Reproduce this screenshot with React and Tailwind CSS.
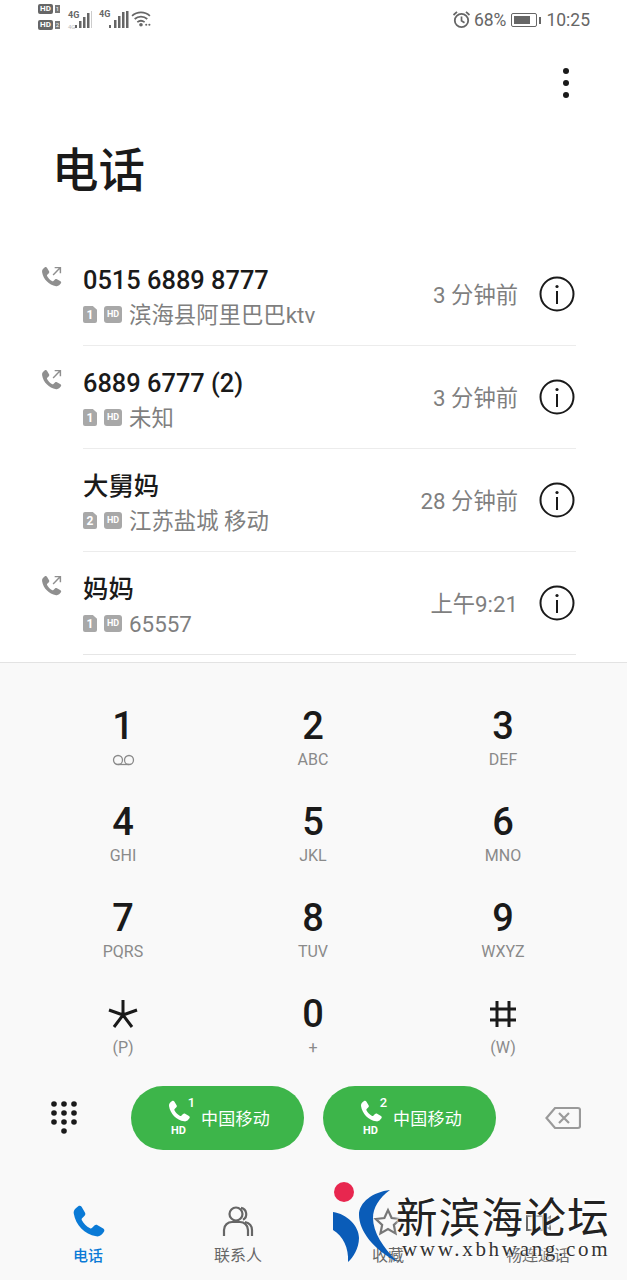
const FONT = "font-['Roboto','Noto_Sans_CJK_SC',sans-serif]"

const calls = [
  { name: "0515 6889 8777", sim: "1", sub: "滨海县阿里巴巴ktv", time: "3 分钟前", out: true },
  { name: "6889 6777 (2)", sim: "1", sub: "未知", time: "3 分钟前", out: true },
  { name: "大舅妈", sim: "2", sub: "江苏盐城 移动", time: "28 分钟前", out: false },
  { name: "妈妈", sim: "1", sub: "65557", time: "上午9:21", out: true },
]

const keys = [
  ["1", null], ["2", "ABC"], ["3", "DEF"],
  ["4", "GHI"], ["5", "JKL"], ["6", "MNO"],
  ["7", "PQRS"], ["8", "TUV"], ["9", "WXYZ"],
  ["*", "(P)"], ["0", "+"], ["#", "(W)"],
]

const PHONE = "M6.6 2.2c.7-.5 1.6-.3 2 .4l2 3.4c.4.6.3 1.4-.2 1.9L8.9 9.4c-.3.3-.4.7-.2 1.1 1.1 2.200 2.800 3.900 5 5 .4.2.8.1 1.100-.2l1.500-1.500c.5-.5 1.300-.6 1.900-.2l3.400 2c.7.4.9 1.300.4 2-1 1.500-2.600 3.100-4.600 2.700C10.300 18.900 5.100 13.700 3.900 6.600 3.600 4.700 5.100 3.200 6.600 2.200z"

const CallOutIcon = () => (
  <svg width="25" height="25" viewBox="0 0 24 24" fill="none">
    <path d={PHONE} fill="#8f8f8f" />
    <path d="M14.500 9.500 21.500 2.500M16 2.500h5.500V8" stroke="#8f8f8f" strokeWidth="1.400" />
  </svg>
)

const SimBadge = ({ n }) => (
  <span className="w-[14px] h-[17px] bg-[#a8a8a8] rounded-[2px] text-white text-[12px] font-bold flex items-center justify-center leading-none [clip-path:polygon(0_0,70%_0,100%_22%,100%_100%,0_100%)]">{n}</span>
)

const HdBadge = () => (
  <span className="w-[18px] h-[17px] bg-[#a8a8a8] rounded-[3px] text-white text-[9px] font-bold flex items-center justify-center leading-none">HD</span>
)

const InfoIcon = () => (
  <svg width="36" height="36" viewBox="0 0 36 36" fill="none">
    <circle cx="18" cy="18" r="16.500" stroke="#1a1a1a" strokeWidth="2" />
    <circle cx="18" cy="10.500" r="1.600" fill="#1a1a1a" />
    <rect x="17" y="15" width="2" height="13" fill="#1a1a1a" />
  </svg>
)

const CallRow = ({ call, last }) => (
  <div className="flex h-[103px]">
    <div className="w-[83px] pl-[38px] pt-[22px] shrink-0">
      {call.out && <CallOutIcon />}
    </div>
    <div className={`w-[493px] flex items-center border-b ${last ? "border-[#e6e6e6]" : "border-[#ececec]"}`}>
      <div className="flex-1 min-w-0 pt-[4px]">
        <p className="text-[25.400px] leading-[34px] font-medium text-[#1a1a1a]">{call.name}</p>
        <div className="flex items-center mt-[3px] text-[22.400px] leading-[30px] text-[#7f7f7f]">
          <SimBadge n={call.sim} />
          <span className="ml-[7px]"><HdBadge /></span>
          <span className="ml-[7px]">{call.sub}</span>
        </div>
      </div>
      <span className="text-[22.300px] text-[#7f7f7f] mr-[21px] pt-[3px]">{call.time}</span>
      <span className="mr-px pb-px"><InfoIcon /></span>
    </div>
  </div>
)

const StatusBar = () => (
  <div className="h-[40px] flex items-start justify-between pl-[38px] pr-[37px]">
    <div className="flex items-start gap-[5px] pt-[4px]">
      <div className="flex flex-col gap-[6px] text-[#666]">
        {["1", "2"].map((n) => (
          <div key={n} className="flex items-center gap-[2px]">
            <span className="w-[15px] h-[10px] bg-[#666] rounded-[2px] text-white text-[8px] font-bold leading-[10px] text-center">HD</span>
            <span className="w-[5px] h-[8px] bg-[#777] text-white text-[6px] leading-[8px] text-center">{n}</span>
          </div>
        ))}
      </div>
      <svg width="76" height="26" viewBox="0 0 76 26" className="text-[#666]">
        <text x="3" y="14" fontSize="9" fontWeight="700" fill="#666">4G</text>
        <text x="3" y="25" fontSize="6" fill="#bbb">4G</text>
        <rect x="10" y="21" width="2" height="3" fill="#666" /><rect x="14" y="17" width="2.500" height="7" fill="#666" />
        <rect x="18" y="13" width="2.500" height="11" fill="#666" /><rect x="22" y="9" width="2.500" height="15" fill="#666" />
        <rect x="26" y="7" width="1" height="17" fill="#ccc" />
        <text x="34" y="13" fontSize="9" fontWeight="700" fill="#666">4G</text>
        <rect x="44" y="21" width="2" height="3" fill="#666" /><rect x="49" y="16" width="2.500" height="8" fill="#666" />
        <rect x="53" y="12" width="2.500" height="12" fill="#666" /><rect x="57" y="8" width="2.500" height="16" fill="#666" />
        <rect x="61" y="7" width="2.500" height="17" fill="#666" />
      </svg>
      <svg width="21" height="18" viewBox="0 0 20 17" fill="none" className="-ml-[15px] mt-[6px]">
        <path d="M1 5.500C6 1 13 1 18 5.500M3.500 8.500C7 5.500 12 5.500 15.500 8.500M6 11.500c2-1.500 5-1.500 7 0" stroke="#666" strokeWidth="1.700" />
        <circle cx="9.500" cy="14" r="1.700" fill="#666" />
        <circle cx="14.500" cy="14" r="1" fill="#666" /><circle cx="17.500" cy="14" r="1" fill="#666" />
      </svg>
    </div>
    <div className="flex items-center h-[40px] text-[17.500px] text-[#666]">
      <svg width="19" height="19" viewBox="0 0 19 19" fill="none" className="mr-[3px] -mt-[2px]">
        <circle cx="9.500" cy="10.500" r="6.700" stroke="#666" strokeWidth="1.800" />
        <path d="M9.500 6.500v4.300l3 2M1.500 5 5 1.800M17.500 5 14 1.800" stroke="#666" strokeWidth="1.700" />
      </svg>
      <span>68%</span>
      <span className="ml-[5px] w-[26px] h-[14px] border border-[#666] rounded-[2px] p-[2px] flex">
        <span className="w-[16px] bg-[#666]" />
      </span>
      <span className="ml-[2px] w-[2px] h-[7px] bg-[#666]" />
      <span className="ml-[5px]">10:25</span>
    </div>
  </div>
)

const KeySymbol = ({ value }) => {
  if (value === "*") {
    return (
      <svg width="32" height="32" viewBox="0 0 32 32" fill="none" stroke="#1a1a1a" strokeWidth="3">
        <path d="M16 2v15M2 12l14 5M30 12l-14 5M7 29l9-12M25 29l-9-12" />
      </svg>
    )
  }
  if (value === "#") {
    return (
      <svg width="32" height="32" viewBox="0 0 32 32" fill="none" stroke="#1a1a1a" strokeWidth="3">
        <path d="M10 3v26M22 3v26M3 11h26M3 22h26" />
      </svg>
    )
  }
  return <span className="text-[38px] leading-[32px] font-medium text-[#1a1a1a]">{value}</span>
}

const DialKey = ({ value, sub }) => (
  <div className="h-[96px] flex flex-col items-center">
    <div className="h-[32px] flex items-center justify-center"><KeySymbol value={value} /></div>
    <div className="h-[20px] mt-[8px] flex items-center justify-center text-[16px] leading-[20px] text-[#8a8a8a]">
      {sub ?? (
        <svg width="23" height="12" viewBox="0 0 23 12" fill="none" stroke="#8a8a8a" strokeWidth="1.300">
          <circle cx="6" cy="6" r="4.500" /><circle cx="17" cy="6" r="4.500" /><path d="M6 10.500h11" />
        </svg>
      )}
    </div>
  </div>
)

const SimCallButton = ({ n }) => (
  <button className="w-[173px] h-[64px] rounded-full bg-[#3db54a] flex items-center justify-center text-white">
    <span className="relative w-[24px] h-[40px] mr-[9px] ml-[3px]">
      <svg width="22" height="24" viewBox="3 1.500 19.500 21" className="absolute left-0 top-[2px]"><path d={PHONE} fill="#fff" /></svg>
      <span className="absolute right-[-3px] top-[-3px] text-[13px] leading-[15px] font-medium">{n}</span>
      <span className="absolute left-[3px] top-[27px] text-[11px] leading-[12px] font-bold">HD</span>
    </span>
    <span className="text-[17px] tracking-[0.2px] pt-[3px]">中国移动</span>
  </button>
)

const Tab = ({ label, active, children }) => (
  <div className="w-[150px] flex flex-col items-center">
    <div className="h-[36px] flex items-center justify-center">{children}</div>
    <span className={`mt-[6px] leading-[20px] ${active ? "text-[15px] text-[#0a7ad6] font-medium" : "text-[16px] text-[#666]"}`}>{label}</span>
  </div>
)

// logo mark and text keep a white halo, the tab bar shows through only in the gaps
const Watermark = () => (
  <div className="absolute left-[333px] top-[1182px] w-[294px] h-[98px]">
    <svg width="75" height="82" viewBox="0 0 75 82" className="absolute left-0 top-0">
      <circle cx="11" cy="10" r="10" fill="#e8274f" />
      <path d="M0 30C14 32 26 44 26 56 26 66 20 76 15 80 16 66 10 54 0 48z" fill="#0a5cb8" />
      <path d="M57 8C40 10 26 20 26 33 26 48 40 68 65 80 50 66 40 50 40 36 40 26 46 16 57 8z" fill="#0a5cb8" />
    </svg>
    <span className="absolute left-[63px] top-[7px] text-[41.500px] leading-[52px] tracking-[1.300px] text-[#222] font-['Noto_Sans_CJK_SC',sans-serif] whitespace-nowrap [text-shadow:0_0_3px_#fff,0_0_3px_#fff,0_0_5px_#fff]">新滨海论坛</span>
    <span className="absolute left-[69px] top-[55px] text-[21px] leading-[24px] tracking-[2.700px] text-[#333] font-['Liberation_Serif',serif] whitespace-nowrap [text-shadow:0_0_2px_#fff,0_0_3px_#fff,0_0_4px_#fff]">www.xbhwang.com</span>
  </div>
)

export default function App() {
  return (
    <div className={`relative w-[627px] h-[1280px] overflow-hidden bg-white flex flex-col ${FONT}`}>
      <StatusBar />

      <div className="h-[63px] flex justify-end pr-[58px] pt-[28px]">
        <div className="flex flex-col gap-[6px]">
          <span className="w-[6px] h-[6px] rounded-full bg-[#1a1a1a]" />
          <span className="w-[6px] h-[6px] rounded-full bg-[#1a1a1a]" />
          <span className="w-[6px] h-[6px] rounded-full bg-[#1a1a1a]" />
        </div>
      </div>

      <div className="h-[140px] pl-[52px] pt-[38px]">
        <h1 className="text-[46.500px] leading-[60px] font-medium text-[#1a1a1a]">电话</h1>
      </div>

      <div className="h-[419px]">
        {calls.map((call, i) => (
          <CallRow key={call.name} call={call} last={i === calls.length - 1} />
        ))}
      </div>

      <div className="flex-1 bg-[#f9f9f9] border-t border-[#e3e3e3] flex flex-col">
        <div className="pt-[47px] pl-[28px] w-[598px] grid grid-cols-3 h-[423px] content-start">
          {keys.map(([value, sub]) => (
            <DialKey key={value} value={value} sub={sub} />
          ))}
        </div>

        <div className="h-[64px] flex items-center pl-[51px]">
          <svg width="26" height="36" viewBox="0 0 26 36" fill="#1a1a1a" className="mr-[54px]">
            {[3, 13, 23].map((cx) =>
              [4, 13, 22].map((cy) => <circle key={`${cx}-${cy}`} cx={cx} cy={cy} r="2.800" />)
            )}
            <circle cx="13" cy="31" r="2.800" />
          </svg>
          <SimCallButton n="1" />
          <span className="w-[19px]" />
          <SimCallButton n="2" />
          <svg width="36" height="24" viewBox="0 0 36 24" fill="none" stroke="#9a9a9a" strokeWidth="2.200" className="ml-[49px]">
            <path d="M10 2h23a2 2 0 0 1 2 2v16a2 2 0 0 1-2 2H10L1.500 12z" />
            <path d="M14 7l10 10M24 7L14 17" />
          </svg>
        </div>

        <div className="flex-1 pt-[54px] pl-[13px] flex">
          <Tab label="电话" active>
            <svg width="33" height="35" viewBox="3 1.500 19.500 21"><path d={PHONE} fill="#0a7ad6" /></svg>
          </Tab>
          <Tab label="联系人">
            <svg width="34" height="34" viewBox="0 0 34 34" fill="none" stroke="#666" strokeWidth="2.200">
              <circle cx="15" cy="9" r="6.500" />
              <path d="M20 2.800a6.500 6.500 0 0 1 2 12" />
              <path d="M3 31v-6c0-5 4-8 8-8h8c4 0 8 3 8 8v6" />
              <path d="M24 17c4 1 7 4 7 8v6" />
            </svg>
          </Tab>
          <Tab label="收藏">
            <svg width="30" height="30" viewBox="0 0 24 24" fill="none" stroke="#777" strokeWidth="1.800">
              <path d="M12 2.500l2.900 6.300 6.800.8-5 4.700 1.300 6.800-6-3.400-6 3.400 1.300-6.800-5-4.700 6.800-.8z" />
            </svg>
          </Tab>
          <Tab label="畅连通话">
            <svg width="30" height="30" viewBox="0 0 30 30" fill="none" stroke="#666" strokeWidth="2">
              <path d="M4 9h16v14H4zM20 14l7-4v12l-7-4" />
            </svg>
          </Tab>
        </div>
      </div>

      <Watermark />
    </div>
  )
}
